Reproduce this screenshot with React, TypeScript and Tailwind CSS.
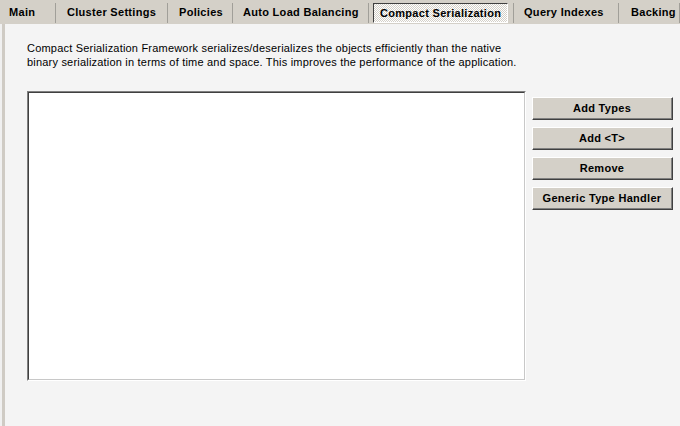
import React from 'react';

const tabs = [
  { label: 'Main', w: 'w-[56px]', pl: 'pl-[9px]' },
  { label: 'Cluster Settings', w: 'w-[112px]', pl: 'pl-[11px]' },
  { label: 'Policies', w: 'w-[65px]', pl: 'pl-[11px]' },
  { label: 'Auto Load Balancing', w: 'w-[136px]', pl: 'pl-[10px]' },
];

const tabsAfter = [
  { label: 'Query Indexes', w: 'w-[105px]', pl: 'pl-[10px]' },
  { label: 'Backing', w: 'w-[61px]', pl: 'pl-[12px]' },
];

function Tab({ label, w, pl }: { label: string; w: string; pl: string }) {
  return (
    <div className={`${w} ${pl} h-full flex items-center shrink-0`}>
      <span className="flex-1 whitespace-nowrap">{label}</span>
      <div className="h-[20px] w-[1px] bg-[#a19f99] mt-[1px]" />
    </div>
  );
}

function Btn({ children }: { children: React.ReactNode }) {
  return (
    <button className="h-[23px] w-[141px] bg-[#d4d0c8] border-t border-l border-white border-b border-r border-b-[#404040] border-r-[#404040] flex items-center justify-center font-bold text-[11px] tracking-[0.3px] text-black">
      <span className="w-full h-full flex items-center justify-center border-b border-r border-[#808080] whitespace-nowrap">
        {children}
      </span>
    </button>
  );
}

export default function App() {
  return (
    <div className="w-[680px] h-[426px] overflow-hidden bg-[#d4d0c8] flex flex-col font-['Liberation_Sans',Arial,sans-serif] text-[11px] text-black">
      {/* tab strip */}
      <div className="h-[24px] flex font-bold tracking-[0.3px] shrink-0">
        {tabs.map((t) => (
          <Tab key={t.label} {...t} />
        ))}
        <div className="w-[145px] h-full flex items-center shrink-0">
          <div className="ml-[4px] mt-[2px] h-[20px] w-[135px] border-t border-l border-[#404040] border-b border-r border-b-white border-r-white bg-[repeating-conic-gradient(#ffffff_0_25%,#d4d0c8_0_50%)] bg-[length:2px_2px] flex items-center pl-[6px] whitespace-nowrap">
            Compact Serialization
          </div>
          <div className="ml-[5px] h-[20px] w-[1px] bg-[#a19f99] mt-[1px]" />
        </div>
        {tabsAfter.map((t) => (
          <Tab key={t.label} {...t} />
        ))}
      </div>

      {/* panel */}
      <div className="flex-1 flex">
        <div className="w-[2px] bg-[#f0f0f0]" />
        <div className="w-[3px] bg-[#cfcbc4]" />
        <div className="flex-1 bg-[#f4f4f4] pl-[22px] pt-[17px]">
          <p className="leading-[14px] tracking-[0.2px] whitespace-nowrap">
            Compact Serialization Framework serializes/deserializes the objects efficiently than the native
            <br />
            binary serialization in terms of time and space. This improves the performance of the application.
          </p>

          <div className="mt-[22px] flex gap-[6px]">
            <div className="w-[499px] h-[290px] border-t border-l border-[#808080] border-b border-r border-b-white border-r-white">
              <div className="w-full h-full bg-white border-t border-l border-[#404040] border-b border-r border-b-[#c8c8c8] border-r-[#c8c8c8]" />
            </div>
            <div className="mt-[6px] flex flex-col gap-[7px]">
              <Btn>Add Types</Btn>
              <Btn>Add &lt;T&gt;</Btn>
              <Btn>Remove</Btn>
              <Btn>Generic Type Handler</Btn>
            </div>
          </div>
        </div>
      </div>
    </div>
  );
}
